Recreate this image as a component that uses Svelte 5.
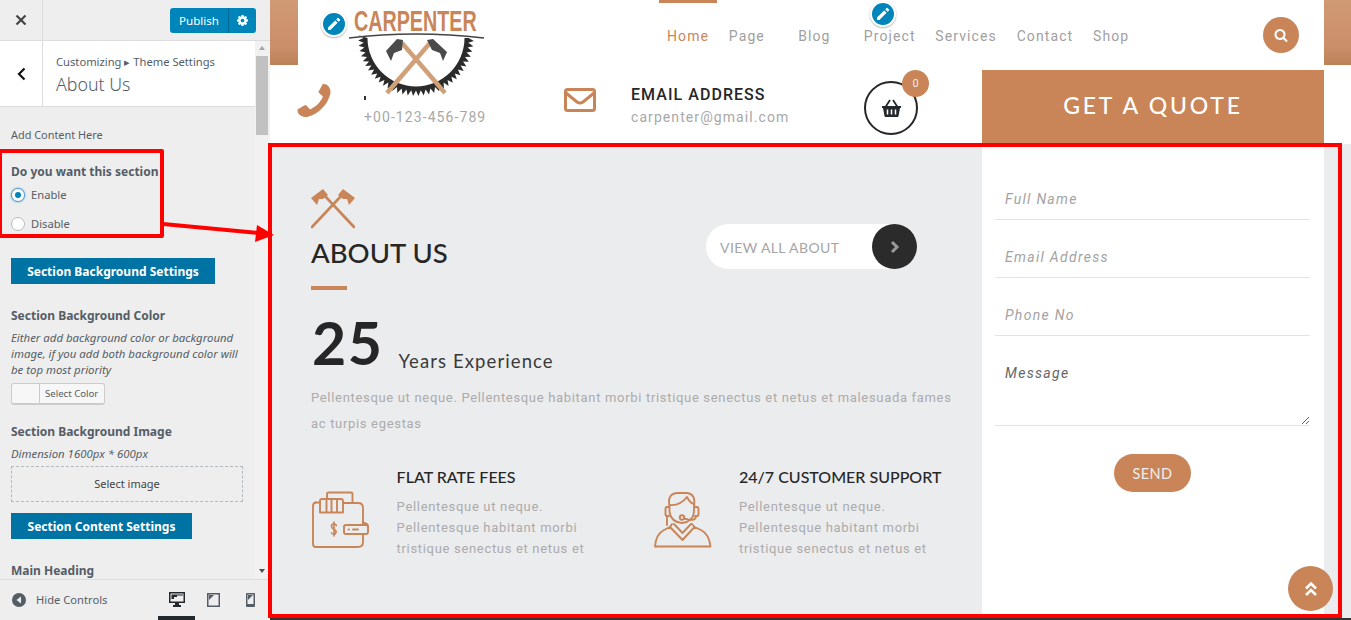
<script>
  const nav = [
    { label: 'Home', active: true },
    { label: 'Page', sub: true },
    { label: 'Blog', sub: true },
    { label: 'Project' },
    { label: 'Services' },
    { label: 'Contact' },
    { label: 'Shop' }
  ];
  const features = [
    { title: 'FLAT RATE FEES', icon: 'wallet' },
    { title: '24/7 CUSTOMER SUPPORT', icon: 'agent' }
  ];
  const cx = 68, cy = 38, ro = 58, root = 52.5, inner = 48.5;
  let saw = '';
  const teeth = 34;
  for (let i = 0; i <= teeth; i++) {
    const a = (i / teeth) * Math.PI;
    const a2 = ((i + 0.55) / teeth) * Math.PI;
    const p = (r, t) => `${(cx + r * Math.cos(t)).toFixed(1)} ${(cy + r * Math.sin(t)).toFixed(1)}`;
    saw += `${i ? 'L' : 'M'}${p(root, a)} L${p(ro, a2)} `;
  }
  saw += `L${cx - inner} ${cy} A${inner} ${inner} 0 0 0 ${cx + inner} ${cy} Z`;
  const pencil = 'M3 12.6 L3 15 L5.4 15 L12.6 7.8 L10.2 5.4 Z M11.2 4.4 L13.6 6.8 L15 5.4 Q15.4 5 15 4.6 L13.4 3 Q13 2.6 12.6 3 Z';
  const phone = 'M1600 1240q0 27-10 70.5t-21 68.5q-21 50-122 106-94 51-186 51-27 0-53-3.5t-57.5-12.5-47-14.5-55.5-20.5-49-18q-98-35-175-83-127-79-264-216t-216-264q-48-77-83-175-3-9-18-49t-20.5-55.5-14.5-47-12.5-57.5-3.5-53q0-92 51-186 56-101 106-122 25-11 68.5-21t70.5-10q14 0 21 3 18 6 53 76 11 19 30 54t35 63.5 31 53.5q3 4 17.5 25t21.5 35.5 7 28.5q0 20-28.5 50t-62 55-62 53-28.5 46q0 9 5 22.5t8.5 20.5 14 24 11.5 19q76 137 174 235t235 174q2 1 19 11.5t24 14 20.5 8.5 22.5 5q18 0 46-28.5t53-62 55-62 50-28.5q14 0 28.5 7t35.5 21.5 25 17.5q25 15 53.5 31t63.5 35 54 30q70 35 76 53 3 7 3 21z';
  const search = 'M1216 832q0-185-131.5-316.5t-316.5-131.5-316.5 131.5-131.5 316.5 131.5 316.5 316.5 131.5 316.5-131.5 131.5-316.5zm512 832q0 52-38 90t-90 38q-54 0-90-38l-343-342q-179 124-399 124-143 0-273.5-55.5t-225-150-150-225-55.5-273.5 55.5-273.5 150-225 225-150 273.5-55.5 273.5 55.5 225 150 150 225 55.5 273.5q0 220-124 399l343 343q37 37 37 90z';
  const cog = 'M1152 896q0-106-75-181t-181-75-181 75-75 181 75 181 181 75 181-75 75-181zm512-109v222q0 12-8 23t-20 13l-185 28q-19 54-39 91 35 50 107 138 10 12 10 25t-9 23q-27 37-99 108t-94 71q-12 0-26-9l-138-108q-44 23-91 38-16 136-29 186-7 28-36 28h-222q-14 0-24.5-8.5t-11.5-21.5l-28-184q-49-16-90-37l-141 107q-10 9-25 9-14 0-25-11-126-114-165-168-7-10-7-23 0-12 8-23 15-21 51-66.5t54-70.5q-27-50-41-99l-183-27q-13-2-21-12.5t-8-23.5v-222q0-12 8-23t19-13l186-28q14-46 39-92-40-57-107-138-10-12-10-24 0-10 9-23 26-36 98.5-107.5t94.5-71.5q13 0 26 10l138 107q44-23 91-38 16-136 29-186 7-28 36-28h222q14 0 24.5 8.5t11.5 21.5l28 184q49 16 90 37l142-107q9-9 24-9 13 0 25 10 129 119 165 170 7 8 7 22 0 12-8 23-15 21-51 66.5t-54 70.5q26 50 41 98l183 28q13 2 21 12.5t8 23.5z';
</script>

<div class="page">
  <aside class="side">
    <div class="topbar">
      <div class="close">
        <svg width="12" height="12" viewBox="0 0 12 12"><path d="M1.5 1.5 L10.5 10.5 M10.5 1.5 L1.5 10.5" stroke="#444" stroke-width="2.2" /></svg>
      </div>
      <div class="publish">
        <span class="pub-label">Publish</span>
        <span class="pub-gear"><svg width="13" height="13" viewBox="0 0 1792 1792"><path d={cog} fill="#fff" /></svg></span>
      </div>
    </div>
    <div class="side-mid">
      <div class="side-scroll">
        <div class="title-row">
          <div class="back"><svg width="9" height="14" viewBox="0 0 9 14"><path d="M7.5 1.5 L2 7 L7.5 12.5" fill="none" stroke="#111" stroke-width="2.2" /></svg></div>
          <div class="title-text">
            <div class="crumb">Customizing ▸ Theme Settings</div>
            <div class="title">About Us</div>
          </div>
        </div>
        <div class="controls">
          <div class="add">Add Content Here</div>
          <div class="label first">Do you want this section</div>
          <div class="radio r1"><span class="dot on"></span>Enable</div>
          <div class="radio r2"><span class="dot"></span>Disable</div>
          <div class="band b1">Section Background Settings</div>
          <div class="label l2">Section Background Color</div>
          <div class="desc">Either add background color or background image, if you add both background color will be top most priority</div>
          <div class="color"><span class="swatch"></span><span class="color-text">Select Color</span></div>
          <div class="label l3">Section Background Image</div>
          <div class="desc dim">Dimension 1600px * 600px</div>
          <div class="select">Select image</div>
          <div class="band b2">Section Content Settings</div>
          <div class="label l4">Main Heading</div>
        </div>
      </div>
      <div class="scrollbar">
        <span class="arrow up"></span>
        <span class="thumb"></span>
        <span class="arrow down"></span>
      </div>
    </div>
    <div class="side-foot">
      <span class="hide-dot"><svg width="14" height="14" viewBox="0 0 14 14"><circle cx="7" cy="7" r="7" fill="#555d66" /><path d="M9 3.5 L4.5 7 L9 10.5 Z" fill="#eee" /></svg></span>
      <span class="hide-text">Hide Controls</span>
      <span class="device active">
        <svg width="16" height="15" viewBox="0 0 16 15"><path d="M0 0 H16 V11 H10 V13 H12 V15 H4 V13 H6 V11 H0 Z" fill="#23282d" /><path d="M1.5 1.5 H14.5 V9.5 H1.5 Z" fill="#eee" /><path d="M2.5 2.5 H14 V3.5 H8 V5 H5 V7 H2.5 Z" fill="#23282d" /></svg>
      </span>
      <span class="device">
        <svg width="13" height="14" viewBox="0 0 13 14"><rect x=".75" y=".75" width="11.5" height="12.5" fill="none" stroke="#555d66" stroke-width="1.5" /><path d="M2 2 H7 L2 7 Z" fill="#555d66" /></svg>
      </span>
      <span class="device">
        <svg width="9" height="14" viewBox="0 0 9 14"><rect width="9" height="14" rx="1" fill="#555d66" /><rect x="1.5" y="1.5" width="6" height="9.5" fill="#eee" /><path d="M2 2 H7 L2 7 Z" fill="#555d66" /></svg>
      </span>
    </div>
  </aside>

  <main class="site">
    <div class="row-top">
      <div class="photo"></div>
      <div class="nav-wrap">
        <ul class="nav">
          {#each nav as item}
            <li class:active={item.active} class:sub={item.sub}>{item.label}</li>
          {/each}
        </ul>
        <span class="search"><svg width="14" height="14" viewBox="0 0 1792 1792"><path d={search} fill="#fff" /></svg></span>
      </div>
      <div class="photo"></div>
    </div>

    <div class="row-info">
      <div class="info phone-info">
        <span class="info-icon"><svg class="phone-svg" width="42" height="42" viewBox="0 0 1792 1792"><path d={phone} fill="#c98558" /></svg></span>
        <div class="info-text"><span class="hidden-title"></span><div class="info-sub">+00-123-456-789</div></div>
      </div>
      <div class="info mail-info">
        <span class="info-icon">
          <svg width="32" height="24" viewBox="0 0 32 24"><rect x="1.5" y="1.5" width="29" height="21" rx="2" fill="none" stroke="#c98558" stroke-width="3" /><path d="M2 5 L13 14 Q16 16 19 14 L30 5" fill="none" stroke="#c98558" stroke-width="3" /></svg>
        </span>
        <div class="info-text"><div class="info-title">EMAIL ADDRESS</div><div class="info-sub">carpenter@gmail.com</div></div>
      </div>
      <div class="cart">
        <svg width="21" height="18" viewBox="0 0 21 18">
          <path d="M1 7 H20 V9 H19 L17.5 17 Q17.4 18 16.5 18 H4.5 Q3.6 18 3.5 17 L2 9 H1 Z" fill="#23282d" />
          <path d="M4.5 8 L9 1 M16.5 8 L12 1" stroke="#23282d" stroke-width="1.8" fill="none" />
          <path d="M6.5 10.5 V15.5 M10.5 10.5 V15.5 M14.5 10.5 V15.5" stroke="#fff" stroke-width="1.5" />
        </svg>
        <span class="badge">0</span>
      </div>
      <div class="quote">GET A QUOTE</div>
    </div>

    <section class="about">
      <div class="about-left">
        <div class="head-row">
          <div>
            <svg class="axes" width="44" height="40" viewBox="0 0 44 40">
              <path d="M1 38 L31 6 M43 38 L13 6" stroke="#c98558" stroke-width="2.6" fill="none" stroke-linecap="round" />
              <path d="M27 6 L32 0 L44 9 L38 16 L36 10 L32 10 Z" fill="#c98558" />
              <path d="M17 6 L12 0 L0 9 L6 16 L8 10 L12 10 Z" fill="#c98558" />
            </svg>
            <h2>ABOUT US</h2>
          </div>
          <div class="pill">
            <span class="pill-text">VIEW ALL ABOUT</span>
            <span class="pill-go"><svg width="10" height="14" viewBox="0 0 10 14"><path d="M2 2 L7 7 L2 12" fill="none" stroke="#999" stroke-width="3" /></svg></span>
          </div>
        </div>
        <div class="rule"></div>
        <div class="years"><span class="num">25</span><span class="yr">Years Experience</span></div>
        <p class="lead">Pellentesque ut neque. Pellentesque habitant morbi tristique senectus et netus et malesuada fames ac turpis egestas</p>
        <div class="features">
          {#each features as f}
            <div class="feature">
              <div class="f-icon">
                {#if f.icon === 'wallet'}
                  <svg width="60" height="60" viewBox="0 0 60 60" fill="none" stroke="#c98558" stroke-width="1.9" stroke-linejoin="round" stroke-linecap="round">
                    <path d="M16 9 V4 Q16 2.5 17.5 2.5 H40 Q41.5 2.5 41.5 4 V13" />
                    <path d="M5 12.5 H9 M32 13 H47 Q52 13 52 18 V35" />
                    <path d="M2 16 Q2 12.500 5 12.5 M2 16 V54 Q2 57 5 57 H47 Q52 57 52 52 V44" />
                    <path d="M9 22.500 V11 Q9 9 11 9 H30 Q32 9 32 11 V22.500 Z M15.500 9 V22.500 M20.500 9 V22.500 M26 9 V22.500" />
                    <path d="M35 35 H55 Q57 35 57 37 V42 Q57 44 55 44 H35 Q33 44 33 42 V37 Q33 35 35 35 Z" />
                    <path d="M52 33 Q57 33 57 37 M37.500 39.500 H38 M42 39.500 H47" />
                    <path d="M25.500 35.500 Q24 33.500 22 34 Q19.500 35 21 37.500 Q22 39 24 40 Q26 41.500 24.500 43.500 Q22.500 45 20.500 43 M23 32 V46" stroke-width="1.6" />
                  </svg>
                {:else}
                  <svg width="58" height="60" viewBox="0 0 58 60" fill="none" stroke="#c98558" stroke-width="1.9" stroke-linejoin="round" stroke-linecap="round">
                    <path d="M1 56.500 H56.500 Q55 44 47 40 L40.500 37 L28.500 50 L16 37 L10 40 Q2 44 1 56.500 Z" />
                    <path d="M20 34 L28.500 43 L37 34" />
                    <path d="M16 37 L18 34 M40.500 37 L38 34" />
                    <path d="M15.500 16 Q13 4 23 3 H33 Q42 4 40 16 V22 Q39 32 28 33 Q17 32 15.500 22 Z" />
                    <path d="M15.500 15 Q26 16 33 7 Q36 13 40 14" />
                    <path d="M15 17 H13 Q11.500 17 11.500 19 V24 Q11.500 26 13 26 H15 M41 17 H43 Q44.500 17 44.500 19 V24 Q44.500 26 43 26 H41" />
                    <path d="M13 26 V35 M42 26 Q42 31 34 29.500 L30 28.500" />
                    <circle cx="28" cy="27.500" r="2.200" />
                  </svg>
                {/if}
              </div>
              <div>
                <h3>{f.title}</h3>
                <p>Pellentesque ut neque.<br />Pellentesque habitant morbi<br />tristique senectus et netus et</p>
              </div>
            </div>
          {/each}
        </div>
      </div>
      <form class="form">
        <div class="field"><input placeholder="Full Name" /></div>
        <div class="field"><input placeholder="Email Address" /></div>
        <div class="field"><input placeholder="Phone No" /></div>
        <div class="field area"><textarea placeholder="Message"></textarea></div>
        <button type="button" class="send">SEND</button>
      </form>
      <div class="gutter"></div>
    </section>
    <div class="under"></div>
  </main>

  <div class="logo">
    <svg width="137" height="96" viewBox="0 0 137 96">
      <path d={saw} fill="#2b2b2b" />
      <path d="M39 93 L82 43 M97 93 L54 43" stroke="#d0a078" stroke-width="4.500" fill="none" />
      <path d="M79 40 L85 39 L99 52 L95 61 L92 53 L84 50 Z" fill="#4a4a4a" />
      <path d="M55 40 L49 39 L38 51 L43 61 L46 53 L54 50 Z" fill="#4a4a4a" />
      <path d="M1 38 Q67 30 136 38" fill="none" stroke="#444" stroke-width="1.500" />
      <text transform="translate(6 31) scale(.68 1)" class="logo-text">CARPENTER</text>
    </svg>
  </div>
  <span class="edit e1"><svg width="18" height="18" viewBox="0 0 18 18"><path d={pencil} fill="#fff" /></svg></span>
  <span class="edit e2"><svg width="18" height="18" viewBox="0 0 18 18"><path d={pencil} fill="#fff" /></svg></span>
  <span class="to-top"><svg width="14" height="16" viewBox="0 0 14 16"><path d="M2 7.500 L7 2.500 L12 7.500 M2 14 L7 9 L12 14" fill="none" stroke="#fff" stroke-width="2.600" /></svg></span>

  <div class="mark box-a"></div>
  <div class="mark box-b"></div>
  <svg class="arrow-mark" width="120" height="30" viewBox="0 0 120 30"><path d="M0 4 L96 13" stroke="#f00" stroke-width="4" /><path d="M94 5 L111 15 L92 22 Z" fill="#f00" /></svg>
</div>

<style>
  :global(body) { margin: 0; background: #fff; }
  * { box-sizing: border-box; }
  .page { position: relative; width: 1351px; height: 620px; display: flex; overflow: hidden; font-family: Roboto, sans-serif; }

  .side { width: 270px; flex: none; height: 620px; display: flex; flex-direction: column; background: #eee; font-family: "Noto Sans", sans-serif; color: #555d66; }
  .topbar { height: 41px; flex: none; display: flex; justify-content: space-between; border-bottom: 1px solid #ddd; }
  .close { width: 43px; display: flex; align-items: center; justify-content: center; border-right: 1px solid #ddd; }
  .publish { display: flex; height: 25px; margin: 8px 14px 0 0; border-radius: 3px; overflow: hidden; background: #0085ba; color: #fff; font-size: 11.6px; }
  .pub-label { width: 59px; line-height: 25px; text-align: center; border-right: 1px solid #006799; }
  .pub-gear { width: 27px; display: flex; align-items: center; justify-content: center; }
  .side-mid { flex: 1; display: flex; min-height: 0; }
  .side-scroll { flex: 1; overflow: hidden; min-width: 0; }
  .title-row { display: flex; height: 66px; background: #fff; border-bottom: 1px solid #ddd; }
  .back { width: 43px; border-right: 1px solid #ddd; display: flex; align-items: center; justify-content: center; }
  .title-text { padding: 13px 0 0 13px; }
  .crumb { font-size: 11.2px; line-height: 16px; white-space: nowrap; }
  .title { font-size: 17.8px; line-height: 28px; font-weight: 300; }
  .controls { padding: 20px 0 0 11px; position: relative; }
  .add { font-size: 10.9px; line-height: 16px; }
  .label { font-size: 12px; font-weight: 700; line-height: 16px; white-space: nowrap; }
  .first { margin-top: 21px; }
  .radio { display: flex; align-items: center; font-size: 11.2px; line-height: 16px; height: 16px; }
  .r1 { margin-top: 7px; }
  .r2 { margin-top: 13px; }
  .dot { width: 14px; height: 14px; margin-right: 6px; border-radius: 50%; border: 1px solid #b4b9be; background: #fff; position: relative; flex: none; }
  .dot.on { border-color: #5b9dd9; box-shadow: 0 0 2px rgba(30,140,190,.8); }
  .dot.on::after { content: ""; position: absolute; left: 3px; top: 3px; width: 6px; height: 6px; border-radius: 50%; background: #0085ba; }
  .band { height: 26px; line-height: 27px; background: #0073a5; color: #fff; font-weight: 700; font-size: 12px; text-align: center; white-space: nowrap; }
  .b1 { width: 204px; margin-top: 26px; }
  .l2 { margin-top: 24px; }
  .desc { font-size: 11.4px; line-height: 16px; font-style: italic; width: 240px; margin-top: 6px; }
  .color { display: flex; width: 94px; height: 22px; margin-top: 5px; border: 1px solid #ccc; border-bottom-width: 2px; border-radius: 3px; background: #f7f7f7; font-size: 9.6px; line-height: 19px; }
  .swatch { width: 28px; border-right: 1px solid #ccc; flex: none; }
  .color-text { padding-left: 5px; white-space: nowrap; }
  .l3 { margin-top: 19px; }
  .dim { margin-top: 6px; }
  .select { width: 232px; height: 36px; margin-top: 4px; border: 1px dashed #b4b9be; line-height: 34px; text-align: center; font-size: 11px; color: #444; }
  .b2 { width: 181px; margin-top: 11px; }
  .l4 { margin-top: 24px; }
  .scrollbar { width: 15px; flex: none; background: #f1f1f1; position: relative; margin-top: 0; }
  .thumb { position: absolute; left: 1px; right: 2px; top: 15px; height: 79px; background: #c1c1c1; }
  .arrow { position: absolute; left: 4px; border-left: 3.500px solid transparent; border-right: 3.500px solid transparent; }
  .arrow.up { top: 5px; border-bottom: 4px solid #a3a3a3; }
  .arrow.down { bottom: 6px; border-top: 4px solid #505050; }
  .side-foot { height: 41px; flex: none; display: flex; align-items: center; border-top: 1px solid #ddd; padding: 0 0 1px 12px; position: relative; }
  .hide-dot { display: flex; }
  .hide-text { margin-left: 10px; font-size: 11.2px; width: 122px; white-space: nowrap; }
  .device { width: 37px; height: 40px; display: flex; align-items: center; justify-content: center; margin-bottom: -1px; }
  .device.active { border-bottom: 4px solid #23282d; padding-top: 2px; }

  .site { flex: 1; min-width: 0; display: flex; flex-direction: column; background: #fff; }
  .row-top { height: 70px; flex: none; display: flex; align-items: flex-start; }
  .photo { width: 28px; height: 65px; flex: none; background: linear-gradient(180deg, #d09a75, #cb8f6a 70%, #bd8159); }
  .photo:last-child { width: 27px; }
  .nav-wrap { flex: 1; height: 70px; display: flex; align-items: flex-start; padding-left: 361px; }
  .nav { display: flex; gap: 3.750px; list-style: none; margin: 0; padding: 0; }
  .nav li { padding: 25px 8px 0; height: 46px; border-top: 3px solid transparent; font-size: 14px; line-height: 17px; letter-spacing: 1.100px; color: #9f9f9f; white-space: nowrap; }
  .nav li.active { color: #c98558; border-top-color: #c98558; }
  .nav li.sub { padding-right: 21.500px; }
  .search { width: 36px; height: 36px; margin: 17px 25px 0 auto; border-radius: 50%; background: #c98558; display: flex; align-items: center; justify-content: center; }

  .row-info { height: 74px; flex: none; display: flex; }
  .info { display: flex; flex: none; padding-top: 14px; }
  .phone-info { width: 294px; padding-left: 27px; }
  .mail-info { width: 300px; }
  .info-icon { width: 67px; flex: none; display: block; }
  .phone-svg { display: block; transform: scaleX(-1); margin: -3px 0 0 -4px; }
  .mail-info svg { display: block; margin-top: 4px; }
  .info-title { font-size: 16px; font-weight: 500; line-height: 20px; letter-spacing: 1.050px; color: #262626; white-space: nowrap; margin-top: 1px; }
  .info-sub { font-size: 14px; line-height: 18px; letter-spacing: 1.080px; color: #a8a8a8; margin-top: 3px; white-space: nowrap; }
  .hidden-title { display: block; width: 2px; height: 5px; margin: 11px 0 0 0; background: #333; }
  .phone-info .info-sub { margin-top: 8px; }
  .cart { width: 54px; height: 54px; margin-top: 11px; border: 2px solid #262626; border-radius: 50%; position: relative; display: flex; align-items: center; justify-content: center; flex: none; }
  .badge { position: absolute; left: 36px; top: -13px; width: 27px; height: 27px; border-radius: 50%; background: #c98558; color: #eee; font-size: 11px; line-height: 27px; text-align: center; }
  .quote { width: 342px; height: 74px; margin: 0 27px 0 auto; background: #c98558; color: #fff; font-family: Lato, sans-serif; font-size: 23px; font-weight: 500; letter-spacing: 2.800px; line-height: 70px; text-align: center; }

  .about { height: 474px; flex: none; display: flex; background: #ebecee; }
  .about-left { width: 712px; flex: none; padding: 45px 0 0 41px; }
  .head-row { display: flex; justify-content: space-between; padding-right: 65px; }
  .axes { display: block; }
  h2 { margin: 8px 0 0; font-family: Lato, sans-serif; font-weight: 500; font-size: 27.500px; line-height: 32px; color: #262626; white-space: nowrap; }
  .pill { width: 211px; height: 45px; margin-top: 35px; border-radius: 23px; background: #fff; display: flex; align-items: center; justify-content: space-between; padding-left: 14px; font-family: Lato, sans-serif; font-size: 14px; letter-spacing: .4px; color: #a5a5a5; white-space: nowrap; }
  .pill-text { padding-top: 2px; }
  .pill-go { width: 45px; height: 45px; border-radius: 50%; background: #2b2b2b; display: flex; align-items: center; justify-content: center; }
  .rule { width: 36px; height: 4px; margin-top: 17px; background: #c98558; }
  .years { display: flex; align-items: flex-end; margin-top: 24px; color: #262626; font-family: Lato, sans-serif; }
  .num { font-size: 59px; font-weight: 700; line-height: 58px; letter-spacing: 1.500px; margin-left: 1px; }
  .yr { margin-left: 15px; font-size: 18.500px; line-height: 22px; letter-spacing: 1.100px; color: #3a3a3a; }
  .lead { width: 648px; margin: 13px 0 0; font-size: 13px; line-height: 26px; letter-spacing: .68px; color: #ababab; }
  .features { display: flex; margin-top: 29px; }
  .feature { width: 343px; flex: none; display: flex; }
  .f-icon { width: 85.600px; flex: none; padding-top: 24px; }
  .feature:last-child .f-icon { width: 85px; }
  .f-icon svg { display: block; }
  h3 { margin: 0; font-family: Lato, sans-serif; font-weight: 500; font-size: 16px; line-height: 22px; color: #262626; white-space: nowrap; }
  .feature p { margin: 8px 0 0; font-size: 13px; line-height: 21px; letter-spacing: .68px; color: #ababab; white-space: nowrap; }

  .form { width: 342px; flex: none; background: #fff; padding: 18px 14px 0 13px; display: flex; flex-direction: column; align-items: stretch; }
  .field { height: 58px; border-bottom: 1px solid #e4e4e4; padding: 28px 0 0 10px; }
  .field.area { height: 90px; }
  input, textarea { display: block; width: 100%; height: 18px; border: 0; outline: 0; padding: 0; background: none; font: italic 14px/18px Roboto, sans-serif; letter-spacing: 1.300px; }
  input::placeholder { color: #a3a3a3; opacity: 1; }
  textarea { height: 61px; margin-left: 0; }
  textarea::placeholder { color: #666; opacity: 1; }
  .send { width: 77px; height: 38px; margin: 28px auto 0; border: 0; border-radius: 19px; background: #c98558; color: #eee; font-family: Lato, sans-serif; font-size: 14.500px; letter-spacing: .4px; padding: 0; }
  .gutter { flex: 1; }
  .under { flex: 1; background: #333; }

  .logo { position: absolute; left: 348px; top: 0; width: 137px; height: 96px; background: #fff; }
  .logo svg { display: block; }
  .logo-text { font-family: "Liberation Sans", sans-serif; font-weight: 700; font-size: 29px; fill: #c98558; }
  .edit { position: absolute; width: 26px; height: 26px; border-radius: 50%; background: #0085ba; border: 2px solid #fff; box-shadow: 0 1px 2px rgba(0,0,0,.3); display: flex; align-items: center; justify-content: center; }
  .e1 { left: 321px; top: 11px; }
  .e2 { left: 870px; top: 1px; }
  .to-top { position: absolute; left: 1288px; top: 566px; width: 45px; height: 45px; border-radius: 50%; background: #c98558; display: flex; align-items: center; justify-content: center; }
  .mark { position: absolute; border: 4px solid #f00; pointer-events: none; }
  .box-a { left: 268px; top: 143px; width: 1074px; height: 475px; }
  .box-b { left: -2px; top: 149px; width: 166px; height: 89px; border-radius: 2px; }
  .arrow-mark { position: absolute; left: 163px; top: 220px; pointer-events: none; }
</style>
